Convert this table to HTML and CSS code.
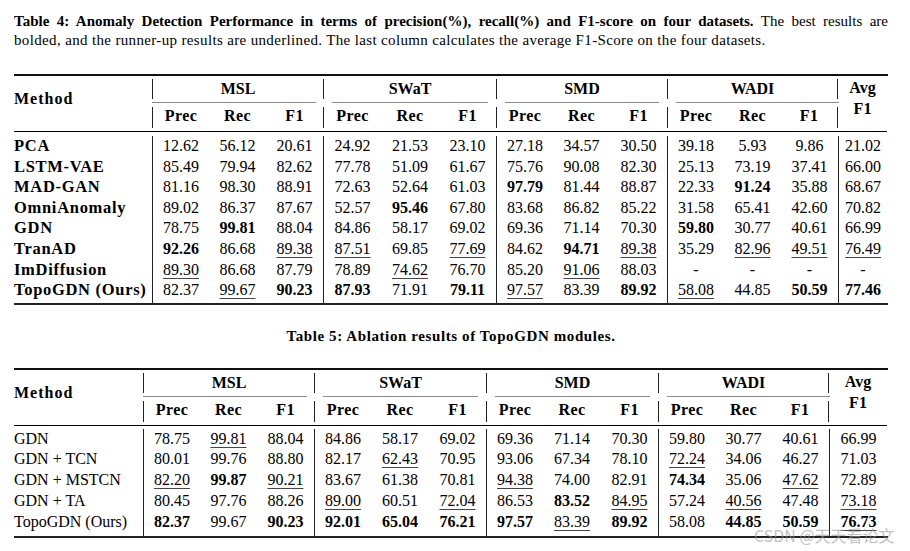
FILE: index.html
```html
<!DOCTYPE html>
<html>
<head>
<meta charset="utf-8">
<link rel="stylesheet" href="styles.css">
</head>
<body>
<div class="page">
  <p class="caption cap4">
    <span class="l1"><b>Table 4: Anomaly Detection Performance in terms of precision(%), recall(%) and F1-score on four datasets.</b> The best results are</span>
    <span class="l2">bolded, and the runner-up results are underlined. The last column calculates the average F1-Score on the four datasets.</span>
  </p>

  <div class="tbl t4">
    <table>
      <colgroup>
        <col style="width:138px">
        <col style="width:57px"><col style="width:57px"><col style="width:57px">
        <col style="width:58px"><col style="width:58px"><col style="width:57px">
        <col style="width:57px"><col style="width:57px"><col style="width:57px">
        <col style="width:57px"><col style="width:57px"><col style="width:57px">
        <col style="width:49px">
      </colgroup>
      <thead>
        <tr>
          <th class="method" rowspan="2">Method</th>
          <th class="grp" colspan="3"><div class="gt">MSL</div><div class="cmid cm-r"></div></th>
          <th class="grp" colspan="3"><div class="gt">SWaT</div><div class="cmid cm-lr"></div></th>
          <th class="grp" colspan="3"><div class="gt">SMD</div><div class="cmid cm-lr"></div></th>
          <th class="grp" colspan="3"><div class="gt gr">WADI</div><div class="cmid cm-l"></div></th>
          <th class="avg" rowspan="2">Avg<br>F1</th>
        </tr>
        <tr>
          <th class="sub"><div class="st vl">Prec</div></th><th class="sub"><div class="st">Rec</div></th><th class="sub"><div class="st">F1</div></th>
          <th class="sub"><div class="st vl">Prec</div></th><th class="sub"><div class="st">Rec</div></th><th class="sub"><div class="st">F1</div></th>
          <th class="sub"><div class="st vl">Prec</div></th><th class="sub"><div class="st">Rec</div></th><th class="sub"><div class="st">F1</div></th>
          <th class="sub"><div class="st vl">Prec</div></th><th class="sub"><div class="st">Rec</div></th><th class="sub"><div class="st vr">F1</div></th>
        </tr>
      </thead>
      <tbody class="bold-names">
        <tr class="spacer top"><td></td><td class="vl" colspan="3"></td><td class="vl" colspan="3"></td><td class="vl" colspan="3"></td><td class="vl" colspan="3"></td><td class="vl"></td></tr>
        <tr><td class="nm">PCA</td><td class="vl">12.62</td><td>56.12</td><td>20.61</td><td class="vl">24.92</td><td>21.53</td><td>23.10</td><td class="vl">27.18</td><td>34.57</td><td>30.50</td><td class="vl">39.18</td><td>5.93</td><td>9.86</td><td class="vl">21.02</td></tr>
        <tr><td class="nm">LSTM-VAE</td><td class="vl">85.49</td><td>79.94</td><td>82.62</td><td class="vl">77.78</td><td>51.09</td><td>61.67</td><td class="vl">75.76</td><td>90.08</td><td>82.30</td><td class="vl">25.13</td><td>73.19</td><td>37.41</td><td class="vl">66.00</td></tr>
        <tr><td class="nm">MAD-GAN</td><td class="vl">81.16</td><td>98.30</td><td>88.91</td><td class="vl">72.63</td><td>52.64</td><td>61.03</td><td class="vl"><b>97.79</b></td><td>81.44</td><td>88.87</td><td class="vl">22.33</td><td><b>91.24</b></td><td>35.88</td><td class="vl">68.67</td></tr>
        <tr><td class="nm">OmniAnomaly</td><td class="vl">89.02</td><td>86.37</td><td>87.67</td><td class="vl">52.57</td><td><b>95.46</b></td><td>67.80</td><td class="vl">83.68</td><td>86.82</td><td>85.22</td><td class="vl">31.58</td><td>65.41</td><td>42.60</td><td class="vl">70.82</td></tr>
        <tr><td class="nm">GDN</td><td class="vl">78.75</td><td><b>99.81</b></td><td>88.04</td><td class="vl">84.86</td><td>58.17</td><td>69.02</td><td class="vl">69.36</td><td>71.14</td><td>70.30</td><td class="vl"><b>59.80</b></td><td>30.77</td><td>40.61</td><td class="vl">66.99</td></tr>
        <tr><td class="nm">TranAD</td><td class="vl"><b>92.26</b></td><td>86.68</td><td><u>89.38</u></td><td class="vl"><u>87.51</u></td><td>69.85</td><td><u>77.69</u></td><td class="vl">84.62</td><td><b>94.71</b></td><td><u>89.38</u></td><td class="vl">35.29</td><td><u>82.96</u></td><td><u>49.51</u></td><td class="vl"><u>76.49</u></td></tr>
        <tr><td class="nm">ImDiffusion</td><td class="vl"><u>89.30</u></td><td>86.68</td><td>87.79</td><td class="vl">78.89</td><td><u>74.62</u></td><td>76.70</td><td class="vl">85.20</td><td><u>91.06</u></td><td>88.03</td><td class="vl">-</td><td>-</td><td>-</td><td class="vl">-</td></tr>
        <tr><td class="nm">TopoGDN (Ours)</td><td class="vl">82.37</td><td><u>99.67</u></td><td><b>90.23</b></td><td class="vl"><b>87.93</b></td><td>71.91</td><td><b>79.11</b></td><td class="vl"><u>97.57</u></td><td>83.39</td><td><b>89.92</b></td><td class="vl"><u>58.08</u></td><td>44.85</td><td><b>50.59</b></td><td class="vl"><b>77.46</b></td></tr>
        <tr class="spacer bot"><td></td><td class="vl" colspan="3"></td><td class="vl" colspan="3"></td><td class="vl" colspan="3"></td><td class="vl" colspan="3"></td><td class="vl"></td></tr>
      </tbody>
    </table>
  </div>

  <p class="caption cap5"><b>Table 5: Ablation results of TopoGDN modules.</b></p>

  <div class="tbl t5">
    <table>
      <colgroup>
        <col style="width:129px">
        <col style="width:57px"><col style="width:57px"><col style="width:57px">
        <col style="width:57px"><col style="width:58px"><col style="width:57px">
        <col style="width:57px"><col style="width:58px"><col style="width:57px">
        <col style="width:57px"><col style="width:57px"><col style="width:57px">
        <col style="width:58px">
      </colgroup>
      <thead>
        <tr>
          <th class="method" rowspan="2">Method</th>
          <th class="grp" colspan="3"><div class="gt">MSL</div><div class="cmid cm-r"></div></th>
          <th class="grp" colspan="3"><div class="gt">SWaT</div><div class="cmid cm-lr"></div></th>
          <th class="grp" colspan="3"><div class="gt">SMD</div><div class="cmid cm-lr"></div></th>
          <th class="grp" colspan="3"><div class="gt gr">WADI</div><div class="cmid cm-l"></div></th>
          <th class="avg" rowspan="2">Avg<br>F1</th>
        </tr>
        <tr>
          <th class="sub"><div class="st vl">Prec</div></th><th class="sub"><div class="st">Rec</div></th><th class="sub"><div class="st">F1</div></th>
          <th class="sub"><div class="st vl">Prec</div></th><th class="sub"><div class="st">Rec</div></th><th class="sub"><div class="st">F1</div></th>
          <th class="sub"><div class="st vl">Prec</div></th><th class="sub"><div class="st">Rec</div></th><th class="sub"><div class="st">F1</div></th>
          <th class="sub"><div class="st vl">Prec</div></th><th class="sub"><div class="st">Rec</div></th><th class="sub"><div class="st vr">F1</div></th>
        </tr>
      </thead>
      <tbody>
        <tr class="spacer top"><td></td><td class="vl" colspan="3"></td><td class="vl" colspan="3"></td><td class="vl" colspan="3"></td><td class="vl" colspan="3"></td><td class="vl"></td></tr>
        <tr><td class="nm">GDN</td><td class="vl">78.75</td><td><u>99.81</u></td><td>88.04</td><td class="vl">84.86</td><td>58.17</td><td>69.02</td><td class="vl">69.36</td><td>71.14</td><td>70.30</td><td class="vl">59.80</td><td>30.77</td><td>40.61</td><td class="vl">66.99</td></tr>
        <tr><td class="nm">GDN + TCN</td><td class="vl">80.01</td><td>99.76</td><td>88.80</td><td class="vl">82.17</td><td><u>62.43</u></td><td>70.95</td><td class="vl">93.06</td><td>67.34</td><td>78.10</td><td class="vl"><u>72.24</u></td><td>34.06</td><td>46.27</td><td class="vl">71.03</td></tr>
        <tr><td class="nm">GDN + MSTCN</td><td class="vl"><u>82.20</u></td><td><b>99.87</b></td><td><u>90.21</u></td><td class="vl">83.67</td><td>61.38</td><td>70.81</td><td class="vl"><u>94.38</u></td><td>74.00</td><td>82.91</td><td class="vl"><b>74.34</b></td><td>35.06</td><td><u>47.62</u></td><td class="vl">72.89</td></tr>
        <tr><td class="nm">GDN + TA</td><td class="vl">80.45</td><td>97.76</td><td>88.26</td><td class="vl"><u>89.00</u></td><td>60.51</td><td><u>72.04</u></td><td class="vl">86.53</td><td><b>83.52</b></td><td><u>84.95</u></td><td class="vl">57.24</td><td><u>40.56</u></td><td>47.48</td><td class="vl"><u>73.18</u></td></tr>
        <tr><td class="nm">TopoGDN (Ours)</td><td class="vl"><b>82.37</b></td><td>99.67</td><td><b>90.23</b></td><td class="vl"><b>92.01</b></td><td><b>65.04</b></td><td><b>76.21</b></td><td class="vl"><b>97.57</b></td><td><u>83.39</u></td><td><b>89.92</b></td><td class="vl">58.08</td><td><b>44.85</b></td><td><b>50.59</b></td><td class="vl"><b><u>76.73</u></b></td></tr>
        <tr class="spacer bot"><td></td><td class="vl" colspan="3"></td><td class="vl" colspan="3"></td><td class="vl" colspan="3"></td><td class="vl" colspan="3"></td><td class="vl"></td></tr>
      </tbody>
    </table>
  </div>
</div>
<div class="watermark">CSDN @天天看论文</div>
</body>
</html>
```

FILE: styles.css
```css
* { box-sizing: border-box; }

html, body {
  margin: 0;
  padding: 0;
  background: #ffffff;
}

body {
  position: relative;
  width: 910px;
  height: 551px;
  overflow: hidden;
  font-family: "Liberation Serif", "Times New Roman", serif;
  color: #000;
}

.page {
  width: 874px;
  margin-left: 14px;
  padding-top: 12px;
}

.caption {
  margin: 0;
  font-size: 15px;
  line-height: 19px;
}

.cap4 .l1 {
  display: block;
  text-align: justify;
  text-align-last: justify;
}

.cap4 .l2 {
  display: block;
  letter-spacing: 0.35px;
}

.cap5 {
  text-align: center;
  margin-top: 22px;
  letter-spacing: 0.6px;
}

.tbl {
  border-top: 2px solid #111;
  border-bottom: 2px solid #222;
}

.t4 { margin-top: 24px; }
.t5 { margin-top: 22px; }

table {
  width: 873px;
  table-layout: fixed;
  border-collapse: separate;
  border-spacing: 0;
  font-size: 16px;
}

th, td {
  padding: 0;
  text-align: center;
  white-space: nowrap;
}

th {
  font-weight: bold;
}

thead th.method {
  text-align: left;
  vertical-align: middle;
  padding-bottom: 9px;
  letter-spacing: 1px;
  border-bottom: 1px solid #000;
}

thead th.avg {
  vertical-align: top;
  line-height: 21px;
  padding-top: 1px;
  border-bottom: 1px solid #000;
}

th.grp {
  vertical-align: top;
}

.gt {
  margin-top: 3px;
  margin-bottom: 3px;
  height: 20px;
  line-height: 20px;
  border-left: 1px solid #222;
}

.gt.gr {
  border-right: 1px solid #222;
}

.cmid {
  height: 1px;
  background: #8a8a8a;
}

.cm-r { margin-right: 7px; }
.cm-lr { margin-left: 9px; margin-right: 8px; }
.cm-l { margin-left: 9px; margin-right: -1px; }

th.sub {
  vertical-align: top;
  border-bottom: 1px solid #000;
}

.st {
  margin-top: 4px;
  margin-bottom: 3px;
  height: 21px;
  line-height: 18px;
  letter-spacing: 0.4px;
}

.st.vl { border-left: 1px solid #222; }
.st.vr { border-right: 1px solid #222; }

tbody td {
  height: 20.6px;
  line-height: 20.6px;
}

.t5 tbody td {
  height: 20.7px;
  line-height: 20.7px;
}

td.vl {
  border-left: 1px solid #222;
}

td.nm {
  text-align: left;
}

.bold-names td.nm {
  font-weight: bold;
  font-size: 16.5px;
  letter-spacing: 0.7px;
}

tbody tr.spacer td {
  line-height: 0;
  font-size: 0;
}

.t4 tbody tr.spacer.top td { height: 4px; border-left: none; }
.t4 tbody tr.spacer.bot td { height: 2px; }
.t5 tbody tr.spacer.top td { height: 3px; border-left: none; }
.t5 tbody tr.spacer.bot td { height: 4px; }

u {
  text-decoration: underline;
  text-decoration-thickness: 1px;
  text-underline-offset: 3px;
  text-decoration-color: #444;
}

.watermark {
  position: absolute;
  left: 754px;
  top: 525px;
  font-family: "Noto Sans CJK SC", "Noto Sans", sans-serif;
  font-size: 16px;
  line-height: 20px;
  color: rgba(150, 150, 150, 0.6);
  white-space: nowrap;
}
```
